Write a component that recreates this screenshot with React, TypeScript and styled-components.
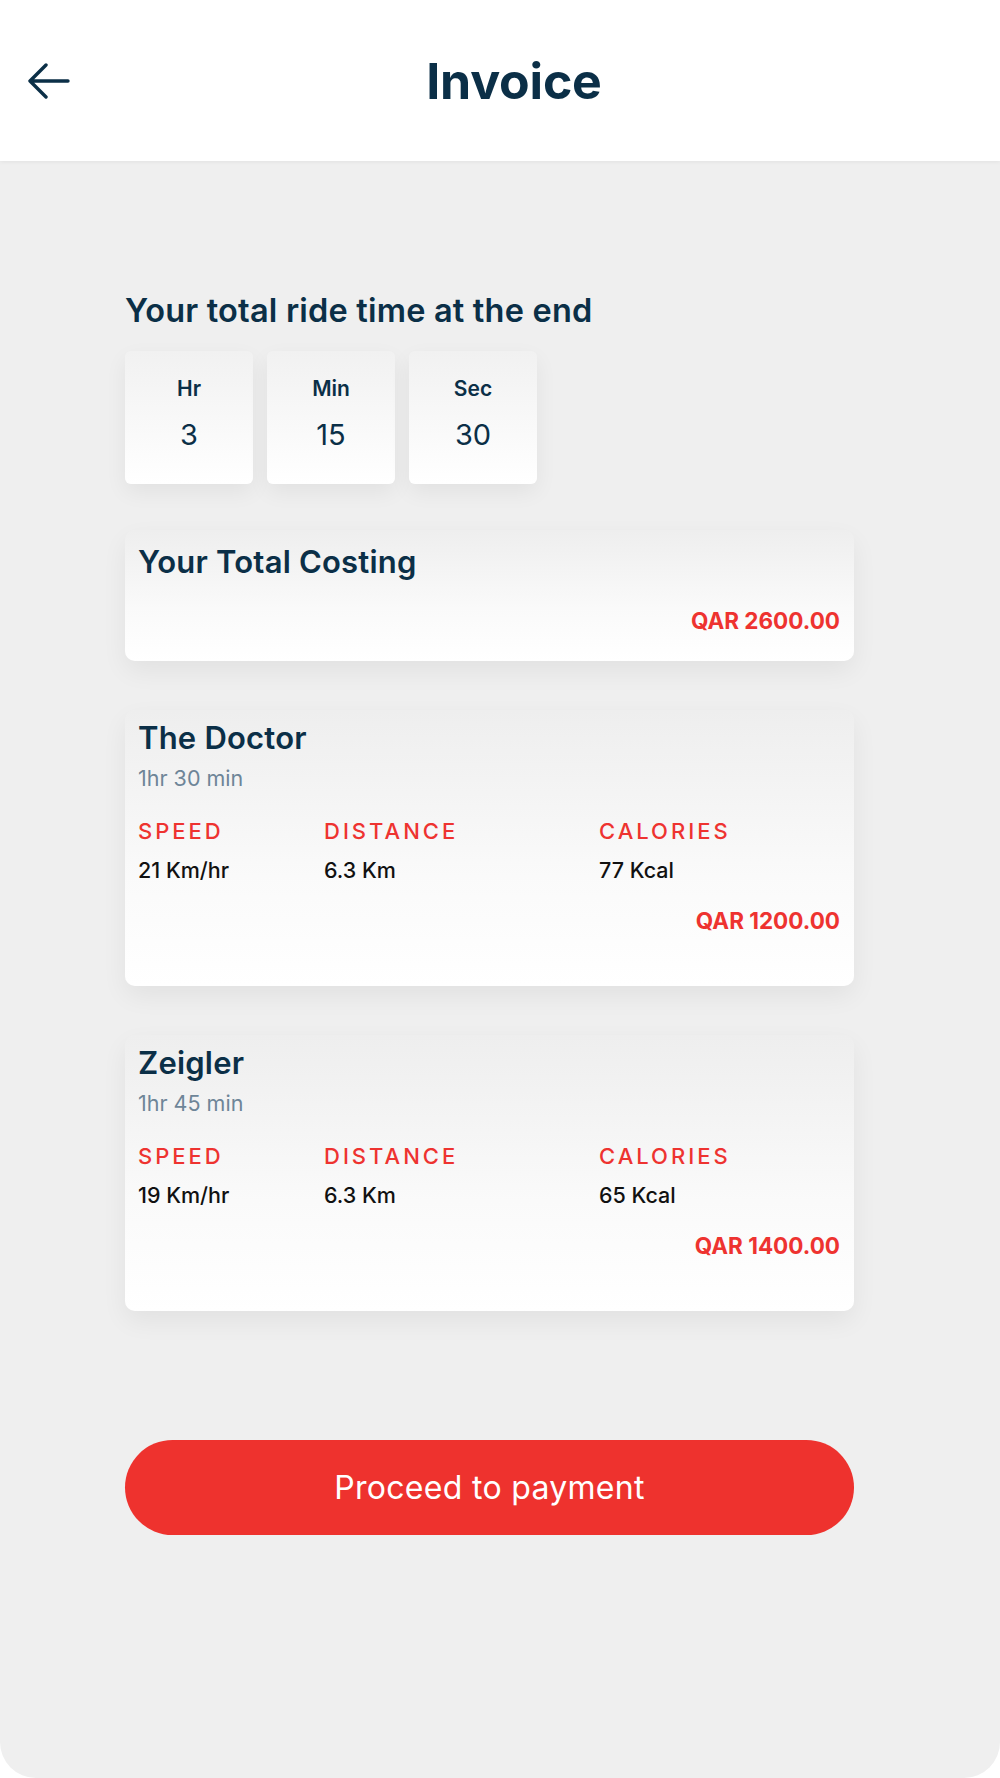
import React from "react";
import styled, { createGlobalStyle } from "styled-components";

const GlobalStyle = createGlobalStyle`
  html, body { margin: 0; padding: 0; background: #ffffff; }
  body { font-family: Inter, "Noto Sans", Arial, sans-serif; }
  * { box-sizing: border-box; }
`;

const NAVY = "#0b2f47";
const RED = "#ee3330";

const Screen = styled.div`
  width: 1000px;
  min-height: 1778px;
  background: #efefef;
  border-radius: 0 0 36px 36px;
  display: flex;
  flex-direction: column;
  overflow: hidden;
`;

const Header = styled.header`
  height: 161px;
  background: #ffffff;
  box-shadow: 0 1px 4px rgba(0, 0, 0, 0.06);
  display: grid;
  grid-template-columns: 100px 1fr 100px;
  align-items: center;
  position: relative;
  z-index: 1;
`;

const BackButton = styled.button`
  border: none;
  background: transparent;
  padding: 0 0 0 28px;
  height: 40px;
  display: flex;
  align-items: center;
  cursor: pointer;
`;

const Title = styled.h1`
  margin: 0;
  text-align: center;
  font-size: 50px;
  line-height: 60px;
  font-weight: 700;
  color: ${NAVY};
  letter-spacing: -0.2px;
  padding-left: 28px;
`;

const Content = styled.main`
  width: 729px;
  margin-left: 125px;
  padding-top: 133px;
  display: flex;
  flex-direction: column;
`;

const SectionTitle = styled.h2`
  margin: 0;
  font-size: 32.5px;
  line-height: 34px;
  font-weight: 600;
  color: ${NAVY};
  letter-spacing: 0.2px;
`;

const TimeRow = styled.div`
  margin-top: 23px;
  display: flex;
  gap: 14px;
`;

const TimeBox = styled.div`
  width: 128px;
  height: 133px;
  border-radius: 6px;
  background: linear-gradient(180deg, #f1f1f1 0%, #ffffff 100%);
  box-shadow: 0 8px 22px rgba(0, 0, 0, 0.06);
  display: flex;
  flex-direction: column;
  align-items: center;
  padding-top: 26px;
`;

const TimeLabel = styled.div`
  font-size: 21px;
  line-height: 24px;
  font-weight: 600;
  color: ${NAVY};
`;

const TimeValue = styled.div`
  margin-top: 18px;
  font-size: 29px;
  line-height: 32px;
  font-weight: 400;
  color: ${NAVY};
`;

const Card = styled.section<{ $top: number; $padTop: number; $padBottom: number }>`
  margin-top: ${(p) => p.$top}px;
  border-radius: 10px;
  background: linear-gradient(180deg, #eeeeee 0%, #fafafa 60%, #ffffff 100%);
  box-shadow: 0 10px 26px rgba(0, 0, 0, 0.06);
  padding: ${(p) => p.$padTop}px 14px ${(p) => p.$padBottom}px 13px;
  display: flex;
  flex-direction: column;
`;

const CardTitle = styled.h3`
  margin: 0;
  font-size: 31px;
  line-height: 34px;
  font-weight: 600;
  color: ${NAVY};
  letter-spacing: 0.2px;
`;

const Duration = styled.div`
  margin-top: 11px;
  font-size: 21.5px;
  line-height: 24px;
  color: #6e8598;
`;

const StatsGrid = styled.div`
  margin-top: 29px;
  display: grid;
  grid-template-columns: 186px 275px 1fr;
  row-gap: 15px;
`;

const StatLabel = styled.div`
  font-size: 22px;
  line-height: 24px;
  font-weight: 500;
  letter-spacing: 3px;
  color: ${RED};
`;

const StatValue = styled.div`
  font-size: 21.5px;
  line-height: 24px;
  font-weight: 500;
  color: #111111;
`;

const Price = styled.div<{ $gap: number }>`
  margin-top: ${(p) => p.$gap}px;
  text-align: right;
  font-size: 22.5px;
  line-height: 24px;
  font-weight: 700;
  color: ${RED};
`;

const PayButton = styled.button`
  margin-top: 129px;
  height: 95px;
  width: 100%;
  border: none;
  border-radius: 48px;
  background: #ee322e;
  color: #ffffff;
  font-family: inherit;
  font-size: 32px;
  font-weight: 400;
  letter-spacing: 0.3px;
  cursor: pointer;
`;

const BackIcon = () => (
  <svg width="42" height="36" viewBox="0 0 42 36" fill="none">
    <path
      d="M18 2 L2 18 L18 34 M2 18 H40"
      stroke={NAVY}
      strokeWidth="3.4"
      strokeLinecap="round"
      strokeLinejoin="round"
    />
  </svg>
);

type Ride = {
  name: string;
  duration: string;
  speed: string;
  distance: string;
  calories: string;
  price: string;
};

const rides: Ride[] = [
  { name: "The Doctor", duration: "1hr 30 min", speed: "21 Km/hr", distance: "6.3 Km", calories: "77 Kcal", price: "QAR 1200.00" },
  { name: "Zeigler", duration: "1hr 45 min", speed: "19 Km/hr", distance: "6.3 Km", calories: "65 Kcal", price: "QAR 1400.00" },
];

const times = [
  { label: "Hr", value: "3" },
  { label: "Min", value: "15" },
  { label: "Sec", value: "30" },
];

export default function App() {
  return (
    <>
      <GlobalStyle />
      <Screen>
        <Header>
          <BackButton aria-label="Back">
            <BackIcon />
          </BackButton>
          <Title>Invoice</Title>
          <div />
        </Header>
        <Content>
          <SectionTitle>Your total ride time at the end</SectionTitle>
          <TimeRow>
            {times.map((t) => (
              <TimeBox key={t.label}>
                <TimeLabel>{t.label}</TimeLabel>
                <TimeValue>{t.value}</TimeValue>
              </TimeBox>
            ))}
          </TimeRow>

          <Card $top={46} $padTop={15} $padBottom={28}>
            <CardTitle>Your Total Costing</CardTitle>
            <Price $gap={30}>QAR 2600.00</Price>
          </Card>

          {rides.map((r) => (
            <Card key={r.name} $top={49} $padTop={11} $padBottom={53}>
              <CardTitle>{r.name}</CardTitle>
              <Duration>{r.duration}</Duration>
              <StatsGrid>
                <StatLabel>SPEED</StatLabel>
                <StatLabel>DISTANCE</StatLabel>
                <StatLabel>CALORIES</StatLabel>
                <StatValue>{r.speed}</StatValue>
                <StatValue>{r.distance}</StatValue>
                <StatValue>{r.calories}</StatValue>
              </StatsGrid>
              <Price $gap={27}>{r.price}</Price>
            </Card>
          ))}

          <PayButton>Proceed to payment</PayButton>
        </Content>
      </Screen>
    </>
  );
}
